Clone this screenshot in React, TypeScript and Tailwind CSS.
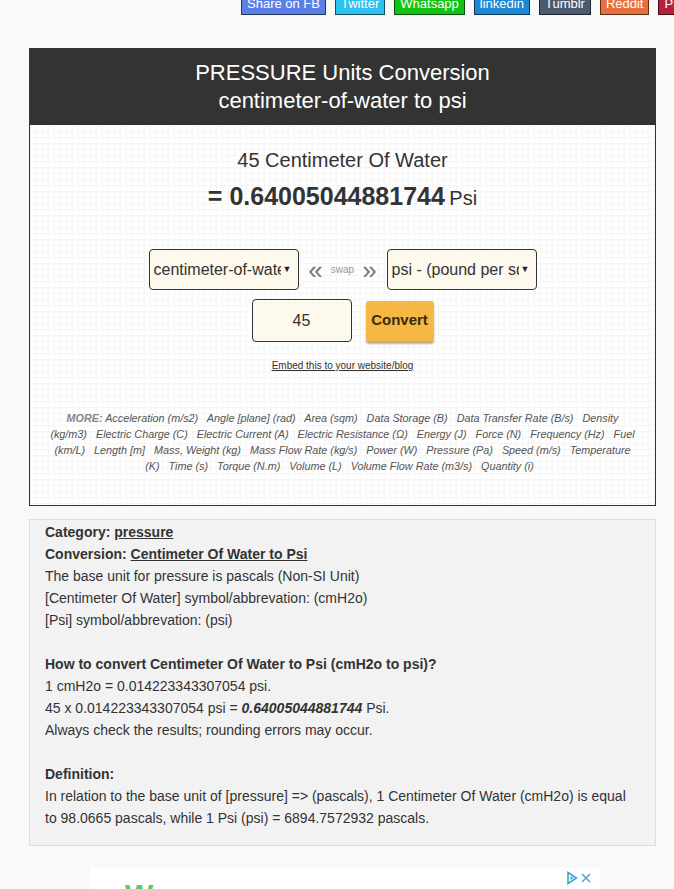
const shareButtons = [
  { label: "Share on FB", color: "bg-[#5b7fe6]" },
  { label: "Twitter", color: "bg-[#2dc1ef]" },
  { label: "Whatsapp", color: "bg-[#12c412]" },
  { label: "linkedin", color: "bg-[#1e86d5]" },
  { label: "Tumblr", color: "bg-[#4b5a6d]" },
  { label: "Reddit", color: "bg-[#e8703c]" },
  { label: "Pinterest", color: "bg-[#b7203a]" },
];

const moreLinks = [
  "Acceleration (m/s2)",
  "Angle [plane] (rad)",
  "Area (sqm)",
  "Data Storage (B)",
  "Data Transfer Rate (B/s)",
  "Density (kg/m3)",
  "Electric Charge (C)",
  "Electric Current (A)",
  "Electric Resistance (Ω)",
  "Energy (J)",
  "Force (N)",
  "Frequency (Hz)",
  "Fuel (km/L)",
  "Length [m]",
  "Mass, Weight (kg)",
  "Mass Flow Rate (kg/s)",
  "Power (W)",
  "Pressure (Pa)",
  "Speed (m/s)",
  "Temperature (K)",
  "Time (s)",
  "Torque (N.m)",
  "Volume (L)",
  "Volume Flow Rate (m3/s)",
  "Quantity (i)",
];

function SelectBox({ value }: { value: string }) {
  return (
    <div className="flex h-[41px] w-[150px] items-center overflow-hidden rounded-[4px] border border-[#333] bg-[#fdf9ec] pl-[4px] pr-[6px]">
      <span className="flex-1 overflow-hidden whitespace-nowrap text-[16px] text-[#333]">
        {value}
      </span>
      <span className="ml-[2px] text-[9px] text-[#222]">▼</span>
    </div>
  );
}

export default function App() {
  return (
    <div className="min-h-[889px] overflow-hidden bg-[#f9f9f9] font-['Liberation_Sans',Arial,sans-serif] text-[#333]">
      <div className="-mt-[11px] flex gap-[9px] whitespace-nowrap pl-[241px]">
        {shareButtons.map((b) => (
          <span
            className={`${b.color} shrink-0 border border-black/60 px-[5px] pb-[2px] pt-[6px] text-[13px] leading-[16px] text-white`}
            key={b.label}
          >
            {b.label}
          </span>
        ))}
      </div>

      <div className="ml-[29px] mr-[18px] mt-[33px] border border-[#333]">
        <div className="bg-[#333] py-[10px] text-center text-[22px] leading-[28px] text-white">
          <div>PRESSURE Units Conversion</div>
          <div>centimeter-of-water to psi</div>
        </div>

        <div className="bg-[#fefefe] bg-[linear-gradient(#f6f6f6_1px,transparent_1px),linear-gradient(90deg,#f6f6f6_1px,transparent_1px)] bg-[size:6px_6px] px-[15px] pb-[31px] pt-[22px] text-center">
          <div className="text-[20px] leading-[26px]">45 Centimeter Of Water</div>
          <div className="mt-[8px] leading-[30px]">
            <span className="text-[25px] font-bold">= 0.64005044881744</span>{" "}
            <span className="text-[20px]">Psi</span>
          </div>

          <div className="mt-[34px] flex items-center justify-center">
            <SelectBox value="centimeter-of-water" />
            <div className="flex w-[88px] items-center justify-center gap-[8px] text-[#777]">
              <span className="text-[26px] font-light leading-none">«</span>
              <span className="text-[10px] text-[#999]">swap</span>
              <span className="text-[26px] font-light leading-none">»</span>
            </div>
            <SelectBox value="psi - (pound per square inch)" />
          </div>

          <div className="mt-[9px] flex items-center justify-center gap-[14px]">
            <div className="flex h-[43px] w-[100px] items-center justify-center rounded-[4px] border border-[#333] bg-[#fdf9ec] text-[16px]">
              45
            </div>
            <div className="flex h-[40px] w-[68px] items-center justify-center rounded-[3px] bg-[#f4b843] text-[15px] font-bold text-[#3a2a10] shadow-[0_3px_2px_rgba(120,80,0,0.45)]">
              Convert
            </div>
          </div>

          <div className="mt-[16px] text-[10px] underline">Embed this to your website/blog</div>

          <div className="mt-[37px] text-[10.8px] italic leading-[16px] text-[#555]">
            <span className="font-bold text-[#888]">MORE:</span>{" "}
            {moreLinks.map((l) => (
              <span key={l}>
                {l}
                {"\u00a0\u00a0 "}
              </span>
            ))}
          </div>
        </div>
      </div>

      <div className="ml-[29px] mr-[18px] mt-[13px] border border-[#ddd] bg-[#f2f2f2] pb-[16px] pl-[15px] pr-[16px] pt-[1px] text-[14px] leading-[22px] text-[#333]">
        <div>
          <b>Category: </b>
          <b className="underline">pressure</b>
        </div>
        <div>
          <b>Conversion: </b>
          <b className="underline">Centimeter Of Water to Psi</b>
        </div>
        <div>The base unit for pressure is pascals (Non-SI Unit)</div>
        <div>[Centimeter Of Water] symbol/abbrevation: (cmH2o)</div>
        <div>[Psi] symbol/abbrevation: (psi)</div>
        <div className="h-[22px]" />
        <div className="font-bold">How to convert Centimeter Of Water to Psi (cmH2o to psi)?</div>
        <div>1 cmH2o = 0.014223343307054 psi.</div>
        <div>
          45 x 0.014223343307054 psi = <b className="italic">0.64005044881744</b> Psi.
        </div>
        <div>Always check the results; rounding errors may occur.</div>
        <div className="h-[22px]" />
        <div className="font-bold">Definition:</div>
        <div>
          In relation to the base unit of [pressure] =&gt; (pascals), 1 Centimeter Of Water (cmH2o) is equal
          to 98.0665 pascals, while 1 Psi (psi) = 6894.7572932 pascals.
        </div>
      </div>

      <div className="relative ml-[90px] mt-[22px] h-[60px] w-[510px] bg-white">
        <div className="absolute right-[8px] top-[3px] flex items-center gap-[2px]">
          <svg width="12" height="14" viewBox="0 0 12 14">
            <path d="M2 1.5 L10.5 7 L2 12.5 Z" fill="none" stroke="#3aa6d0" strokeWidth="1.6" />
            <path d="M4.5 5 L7.5 7 L4.5 9 Z" fill="#3aa6d0" />
          </svg>
          <svg width="12" height="12" viewBox="0 0 12 12">
            <path d="M2 2 L10 10 M10 2 L2 10" stroke="#3aa6d0" strokeWidth="1.4" />
          </svg>
        </div>
        <div className="pl-[35px] pt-[12px] text-[30px] font-bold leading-none text-[#66c466]">W</div>
      </div>
    </div>
  );
}
